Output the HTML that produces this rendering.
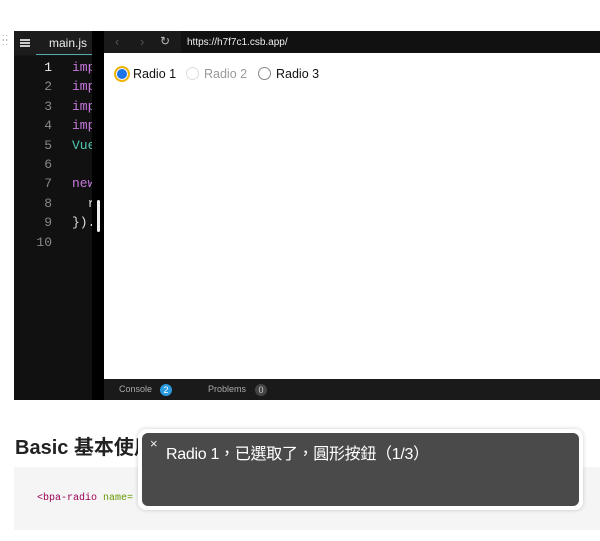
<!DOCTYPE html>
<html><head><meta charset="utf-8"><style>
body{margin:0;width:600px;height:541px;background:#fff;position:relative;overflow:hidden;font-family:"Liberation Sans","Noto Sans CJK TC",sans-serif}
.a{position:absolute}
.mono{font-family:"Liberation Mono","DejaVu Sans Mono",monospace}
</style></head><body>
<div class="a" style="left:2px;top:35px;color:#999;font-size:9px;line-height:5px;letter-spacing:1px">::<br>::</div>
<div class="a" style="left:14px;top:31px;width:586px;height:369px;background:#151515"></div>
<div class="a" style="left:14px;top:31px;width:78px;height:24px;background:#1c1c1c"></div>
<div class="a" style="left:20px;top:39px;width:10px;height:1.5px;background:#ccc;box-shadow:0 3px 0 #ccc,0 6px 0 #ccc"></div>
<div class="a" style="left:49px;top:36px;color:#eee;font-size:12px">main.js</div>
<div class="a" style="left:36px;top:54px;width:56px;height:1px;background:#5aa"></div>
<div class="a" style="left:14px;top:56px;width:78px;height:344px;background:#111"></div>
<div class="a mono" style="left:26px;top:58px;width:26px;text-align:right;color:#888;font-size:13px;line-height:19.4px">
<span style="color:#eee">1</span><br>2<br>3<br>4<br>5<br>6<br>7<br>8<br>9<br>10</div>
<div class="a mono" style="left:72px;top:58px;width:20px;overflow:hidden;white-space:nowrap;color:#c678dd;font-size:13px;line-height:19.4px">imp<br>imp<br>imp<br>imp<br><span style="color:#4ec9b0">Vue</span><br>&nbsp;<br>new<br><span style="color:#ddd">&nbsp;&nbsp;r</span><br><span style="color:#ddd">}).</span></div>
<div class="a" style="left:92px;top:31px;width:12px;height:369px;background:#000"></div>
<div class="a" style="left:97px;top:200px;width:3px;height:32px;background:#eee;border-radius:2px"></div>
<div class="a" style="left:104px;top:31px;width:496px;height:22px;background:#1a1a1a"></div>
<div class="a" style="left:115px;top:34px;color:#555;font-size:13px">&lsaquo;</div>
<div class="a" style="left:140px;top:34px;color:#555;font-size:13px">&rsaquo;</div>
<div class="a" style="left:160px;top:34px;color:#bbb;font-size:12px">↻</div>
<div class="a" style="left:181px;top:31px;width:419px;height:22px;background:#111"></div>
<div class="a" style="left:187px;top:37px;color:#eee;font-size:10px">https://h7f7c1.csb.app/</div>
<div class="a" style="left:104px;top:53px;width:496px;height:326px;background:#fff"></div>
<div class="a" style="left:114px;top:66px;width:16px;height:16px;border-radius:50%;background:#1a73e8;border:2px solid #f0b400;box-sizing:border-box;box-shadow:inset 0 0 0 1px #fff"></div>
<div class="a" style="left:133px;top:67px;font-size:12.5px;color:#111">Radio 1</div>
<div class="a" style="left:186px;top:67px;width:13px;height:13px;border-radius:50%;border:1px solid #ddd;box-sizing:border-box"></div>
<div class="a" style="left:204px;top:67px;font-size:12.5px;color:#999">Radio 2</div>
<div class="a" style="left:258px;top:67px;width:13px;height:13px;border-radius:50%;border:1px solid #888;box-sizing:border-box"></div>
<div class="a" style="left:276px;top:67px;font-size:12.5px;color:#111">Radio 3</div>
<div class="a" style="left:104px;top:379px;width:496px;height:21px;background:#1a1a1a"></div>
<div class="a" style="left:119px;top:384px;font-size:9px;color:#aaa">Console</div>
<div class="a" style="left:160px;top:384px;width:12px;height:12px;border-radius:50%;background:#2a9be0;color:#fff;font-size:9px;text-align:center;line-height:12px">2</div>
<div class="a" style="left:208px;top:384px;font-size:9px;color:#aaa">Problems</div>
<div class="a" style="left:255px;top:384px;width:12px;height:12px;border-radius:50%;background:#444;color:#ccc;font-size:9px;text-align:center;line-height:12px">0</div>
<div class="a" style="left:15px;top:431px;font-size:20px;font-weight:bold;color:#222">Basic 基本使用</div>
<div class="a" style="left:14px;top:467px;width:586px;height:63px;background:#f5f5f5"></div>
<div class="a mono" style="left:37px;top:493px;font-size:10px;color:#905"><span>&lt;bpa-radio</span> <span style="color:#690">name=</span></div>
<div class="a" style="left:138px;top:429px;width:445px;height:81px;background:#fff;border-radius:8px;box-shadow:0 0 4px rgba(0,0,0,.2)"></div>
<div class="a" style="left:142px;top:433px;width:437px;height:73px;background:#4a4a4a;border-radius:6px"></div>
<div class="a" style="left:150px;top:436px;color:#eee;font-size:13px">×</div>
<div class="a" style="left:166px;top:440px;color:#fff;font-size:16px;letter-spacing:-0.3px">Radio 1，已選取了，圓形按鈕（1/3）</div>
</body></html>
